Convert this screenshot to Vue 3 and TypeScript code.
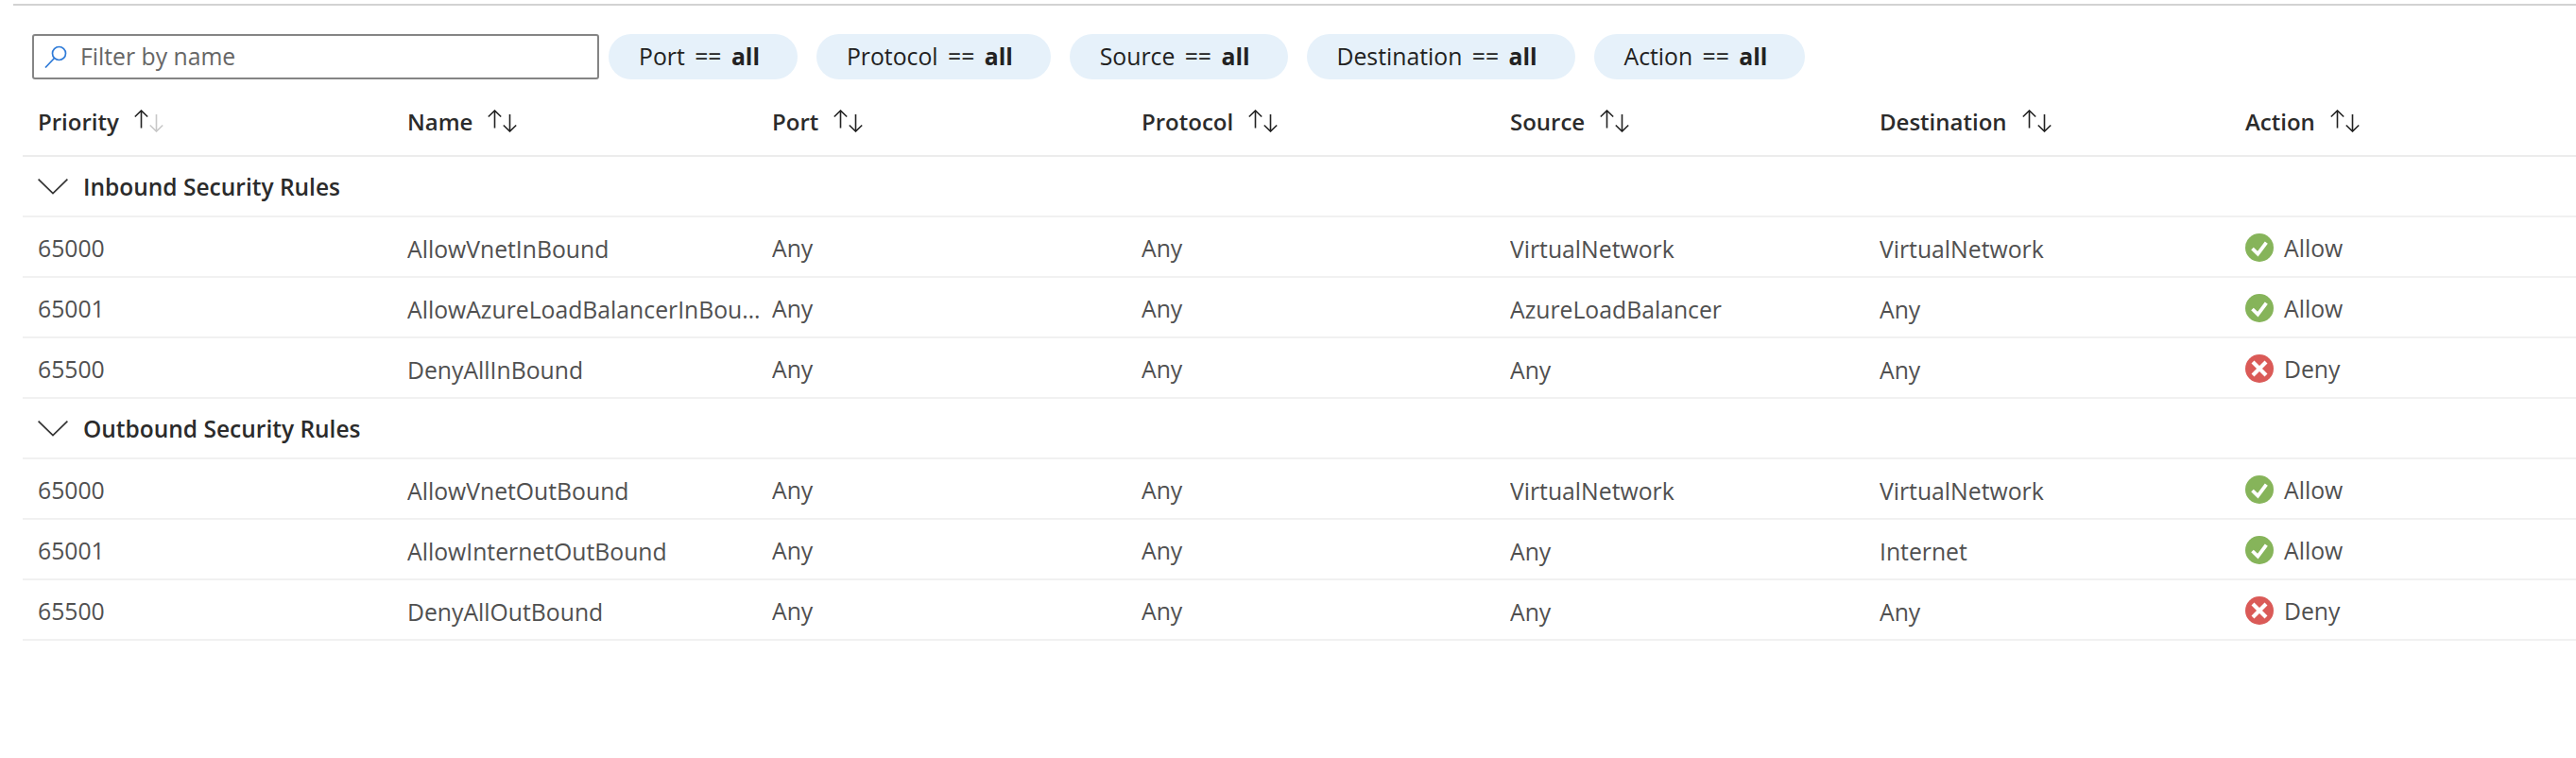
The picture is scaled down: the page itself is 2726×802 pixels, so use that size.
<script setup lang="ts">
type Rule = {
  priority: number
  name: string
  port: string
  protocol: string
  source: string
  destination: string
  action: 'Allow' | 'Deny'
}

const pills = ['Port', 'Protocol', 'Source', 'Destination', 'Action']
const columns = ['Priority', 'Name', 'Port', 'Protocol', 'Source', 'Destination', 'Action']

const groups: { title: string; rules: Rule[] }[] = [
  {
    title: 'Inbound Security Rules',
    rules: [
      { priority: 65000, name: 'AllowVnetInBound', port: 'Any', protocol: 'Any', source: 'VirtualNetwork', destination: 'VirtualNetwork', action: 'Allow' },
      { priority: 65001, name: 'AllowAzureLoadBalancerInBound', port: 'Any', protocol: 'Any', source: 'AzureLoadBalancer', destination: 'Any', action: 'Allow' },
      { priority: 65500, name: 'DenyAllInBound', port: 'Any', protocol: 'Any', source: 'Any', destination: 'Any', action: 'Deny' },
    ],
  },
  {
    title: 'Outbound Security Rules',
    rules: [
      { priority: 65000, name: 'AllowVnetOutBound', port: 'Any', protocol: 'Any', source: 'VirtualNetwork', destination: 'VirtualNetwork', action: 'Allow' },
      { priority: 65001, name: 'AllowInternetOutBound', port: 'Any', protocol: 'Any', source: 'Any', destination: 'Internet', action: 'Allow' },
      { priority: 65500, name: 'DenyAllOutBound', port: 'Any', protocol: 'Any', source: 'Any', destination: 'Any', action: 'Deny' },
    ],
  },
]
</script>

<template>
  <div class="page">
    <div class="topline"></div>

    <div class="filters">
      <label class="search">
        <svg class="search-icon" viewBox="0 0 24 24" fill="none" stroke="#2f7bd8" stroke-width="1.7">
          <circle cx="15.5" cy="8.5" r="7" />
          <path d="M10.5 13.5 1 23.5" />
        </svg>
        <span class="placeholder">Filter by name</span>
      </label>
      <div v-for="pill in pills" :key="pill" class="pill">
        <span>{{ pill }} == <b>all</b></span>
      </div>
    </div>

    <div class="table">
      <div class="row head">
        <div v-for="(col, i) in columns" :key="col" class="head-cell">
          <span>{{ col }}</span>
          <svg class="sort" viewBox="0 0 32 24" fill="none" stroke-width="1.6">
            <path d="M7.5 19.5V1M.8 7.5 7.5 1l6.7 6.5" stroke="#222" />
            <path d="M23.5 5v18M16.8 16.5 23.5 23l6.7-6.5" :stroke="i === 0 ? '#c8c8c8' : '#222'" />
          </svg>
        </div>
      </div>

      <template v-for="group in groups" :key="group.title">
        <div class="group">
          <svg class="chevron" viewBox="0 0 32 17" fill="none" stroke="#333" stroke-width="1.7">
            <path d="M.6.6 16 15.6 31.4.6" />
          </svg>
          <span>{{ group.title }}</span>
        </div>
        <div v-for="rule in group.rules" :key="rule.name" class="row body">
          <div class="cell up">{{ rule.priority }}</div>
          <div class="cell name">{{ rule.name }}</div>
          <div class="cell up">{{ rule.port }}</div>
          <div class="cell up">{{ rule.protocol }}</div>
          <div class="cell">{{ rule.source }}</div>
          <div class="cell">{{ rule.destination }}</div>
          <div class="cell action up">
            <svg v-if="rule.action === 'Allow'" class="status" viewBox="0 0 30 30">
              <circle cx="15" cy="15" r="15" fill="#86b45a" />
              <path d="M7.5 16l5.8 5.6 9-12" fill="none" stroke="#fff" stroke-width="3.8" />
            </svg>
            <svg v-else class="status" viewBox="0 0 30 30">
              <circle cx="15" cy="15" r="15" fill="#da5a57" />
              <path d="M8 8l14 14M22 8 8 22" fill="none" stroke="#fff" stroke-width="4.2" />
            </svg>
            <span>{{ rule.action }}</span>
          </div>
        </div>
      </template>
    </div>
  </div>
</template>

<style scoped>
.page {
  width: 2726px;
  height: 802px;
  padding-top: 4px;
  box-sizing: border-box;
  background: #fff;
  font-family: "Open Sans", "Noto Sans", sans-serif;
  font-size: 24.75px;
  color: #505050;
  overflow: hidden;
}

.topline {
  height: 2px;
  margin-left: 14px;
  background: #d2d2d2;
}

.filters {
  display: flex;
  margin: 30px 0 0 34px;
  height: 48px;
}

.search {
  display: flex;
  align-items: center;
  box-sizing: border-box;
  width: 600px;
  margin-right: 10px;
  padding-left: 11px;
  border: 2px solid #858585;
  border-radius: 3px;
}

.search-icon {
  width: 24px;
  height: 24px;
  margin-right: 14px;
}

.placeholder {
  padding-bottom: 2px;
  color: #666;
}

.pill {
  display: flex;
  align-items: center;
  box-sizing: border-box;
  height: 48px;
  margin-right: 20px;
  padding: 0 40px 2px 32px;
  border-radius: 24px;
  background: #e6f1fa;
  color: #222;
  white-space: pre;
  word-spacing: 4px;
}

.table {
  margin-left: 24px;
}

.row {
  display: grid;
  grid-template-columns: 391px 386px 391px 390px 391px 387px 1fr;
  padding-left: 16px;
  box-sizing: border-box;
}

.head {
  height: 82px;
  border-bottom: 2px solid #ececec;
  align-items: center;
  padding-top: 8px;
  font-size: 24px;
  font-weight: 600;
  color: #2b2b2b;
}

.head-cell {
  display: flex;
  align-items: center;
  gap: 16px;
}

.sort {
  width: 32px;
  height: 24px;
}

.group {
  display: flex;
  align-items: center;
  height: 64px;
  box-sizing: border-box;
  padding-left: 16px;
  border-bottom: 2px solid #f1f1f1;
  font-size: 24.5px;
  font-weight: 600;
  color: #2b2b2b;
}

.chevron {
  width: 32px;
  height: 17px;
  margin-right: 16px;
}

.body {
  height: 64px;
  border-bottom: 2px solid #f1f1f1;
  align-items: center;
}

.cell {
  white-space: nowrap;
  overflow: hidden;
  text-overflow: ellipsis;
  padding-top: 5px;
}

.cell.up {
  padding-top: 2px;
}

.name {
  padding-right: 8px;
}

.action {
  display: flex;
  align-items: center;
  gap: 11px;
}

.status {
  width: 30px;
  height: 30px;
  flex: none;
}
</style>
